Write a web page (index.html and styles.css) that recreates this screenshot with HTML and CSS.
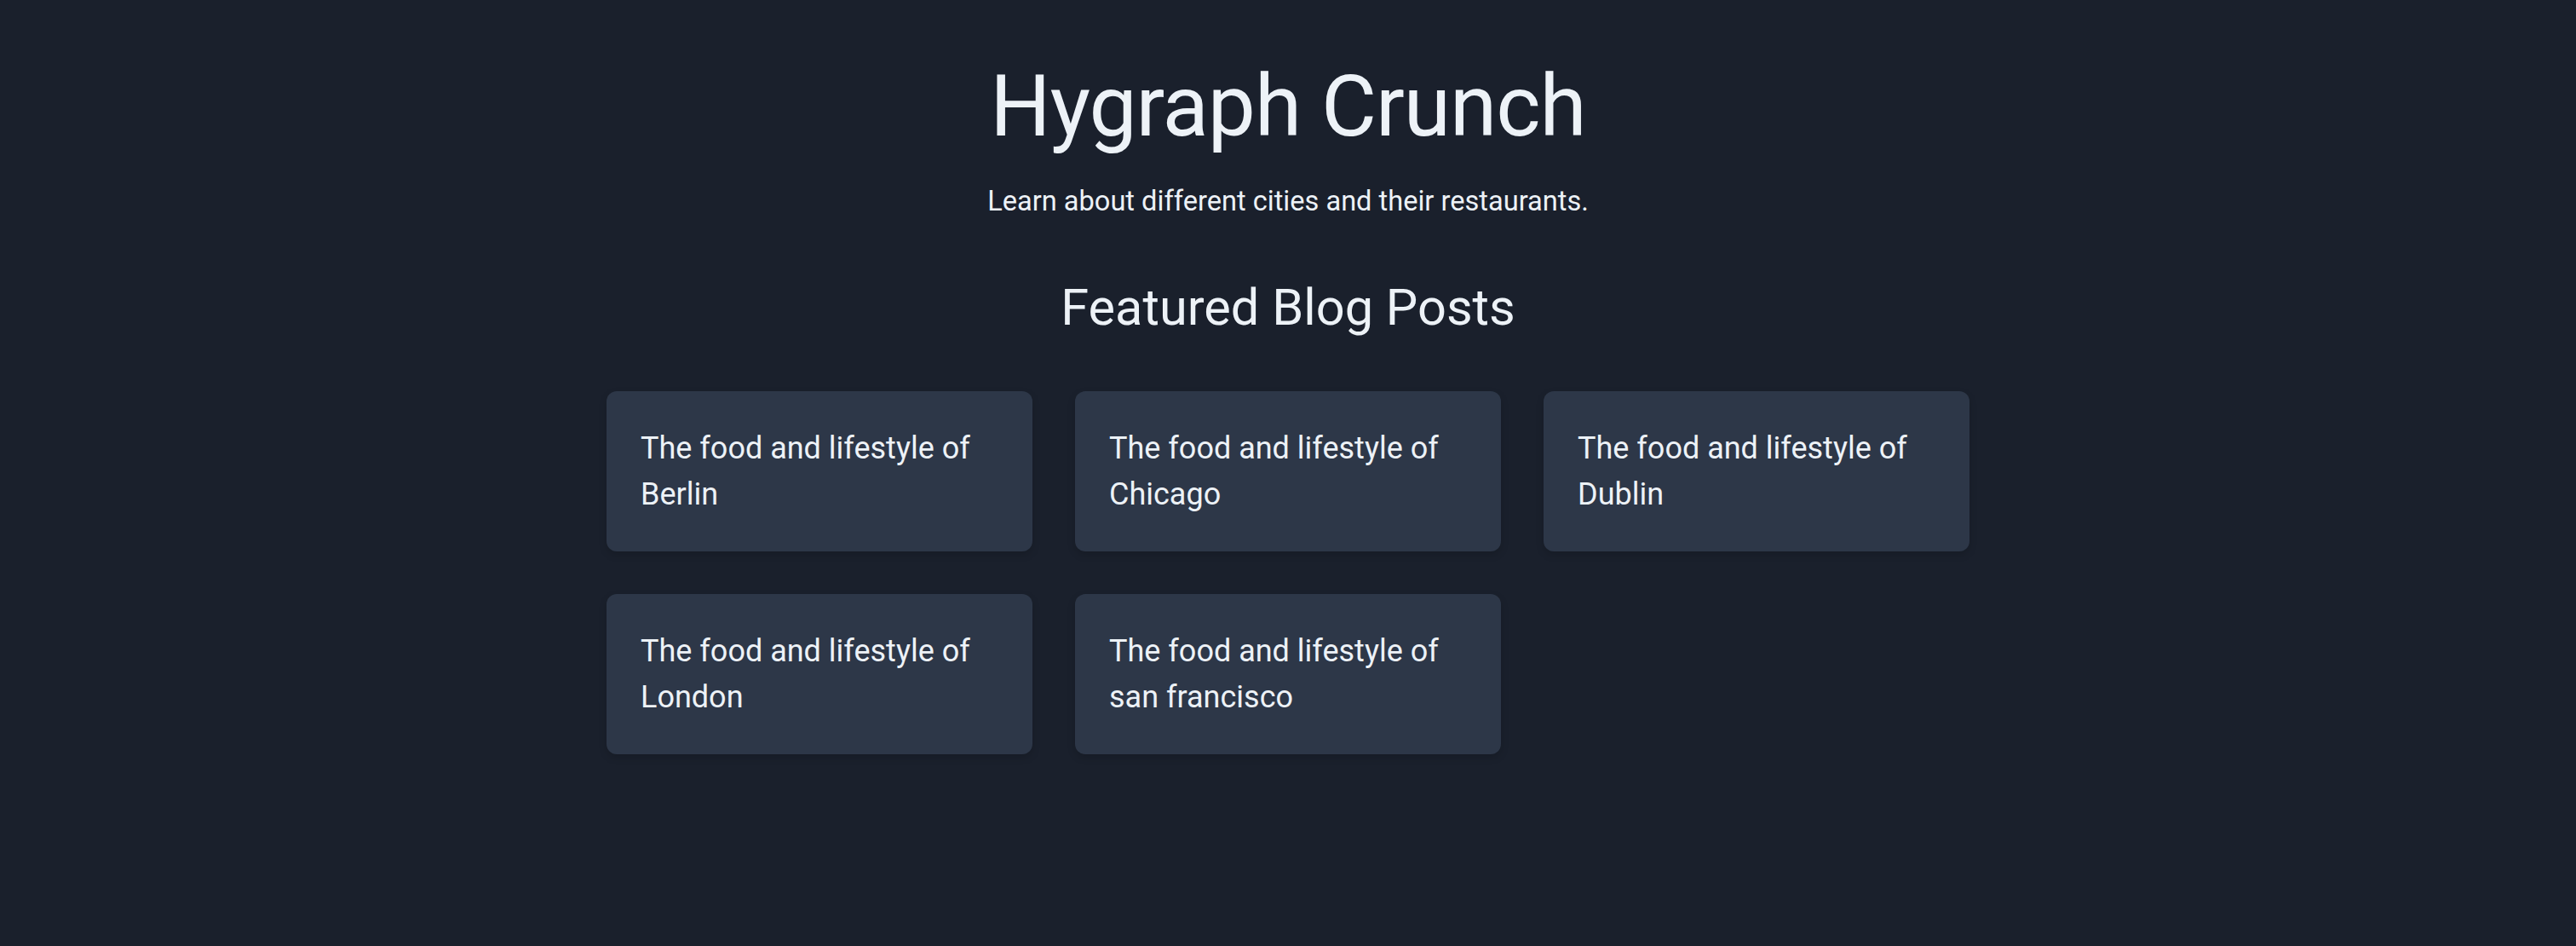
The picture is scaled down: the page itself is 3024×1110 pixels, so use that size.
FILE: index.html
```html
<!DOCTYPE html>
<html lang="en">
<head>
<meta charset="utf-8">
<title>Hygraph Crunch</title>
<link rel="stylesheet" href="styles.css">
</head>
<body>
<main class="page">
  <header class="hero">
    <h1 class="title">Hygraph Crunch</h1>
    <p class="subtitle">Learn about different cities and their restaurants.</p>
  </header>
  <section class="featured">
    <h2 class="section-title">Featured Blog Posts</h2>
    <div class="grid">
      <a class="card" href="#">The food and lifestyle of Berlin</a>
      <a class="card" href="#">The food and lifestyle of Chicago</a>
      <a class="card" href="#">The food and lifestyle of Dublin</a>
      <a class="card" href="#">The food and lifestyle of London</a>
      <a class="card" href="#">The food and lifestyle of san francisco</a>
    </div>
  </section>
</main>
</body>
</html>
```

FILE: styles.css
```css
html, body {
  margin: 0;
  padding: 0;
}
body {
  background: #1a202c;
  color: #edf2f7;
  font-family: Roboto, Inter, "Noto Sans", sans-serif;
  min-height: 1110px;
}
.page {
  display: flex;
  flex-direction: column;
  align-items: center;
  padding-top: 70px;
}
.hero {
  text-align: center;
}
.title {
  margin: 0;
  font-size: 100px;
  font-weight: 400;
  line-height: 1.1;
  letter-spacing: -1px;
}
.subtitle {
  margin: 32px 0 0;
  font-size: 32.6px;
  line-height: 1.5;
}
.featured {
  display: flex;
  flex-direction: column;
  align-items: center;
  margin-top: 65px;
}
.section-title {
  margin: 0;
  font-size: 59.5px;
  font-weight: 400;
  line-height: 1.2;
}
.grid {
  margin-top: 62px;
  width: 1600px;
  display: grid;
  grid-template-columns: repeat(3, 1fr);
  gap: 50px;
}
.card {
  display: block;
  background: #2d3748;
  border-radius: 12px;
  padding: 40px;
  color: #edf2f7;
  text-decoration: none;
  font-size: 36px;
  line-height: 54px;
  box-shadow: 0 4px 10px rgba(0, 0, 0, 0.15);
}
```
